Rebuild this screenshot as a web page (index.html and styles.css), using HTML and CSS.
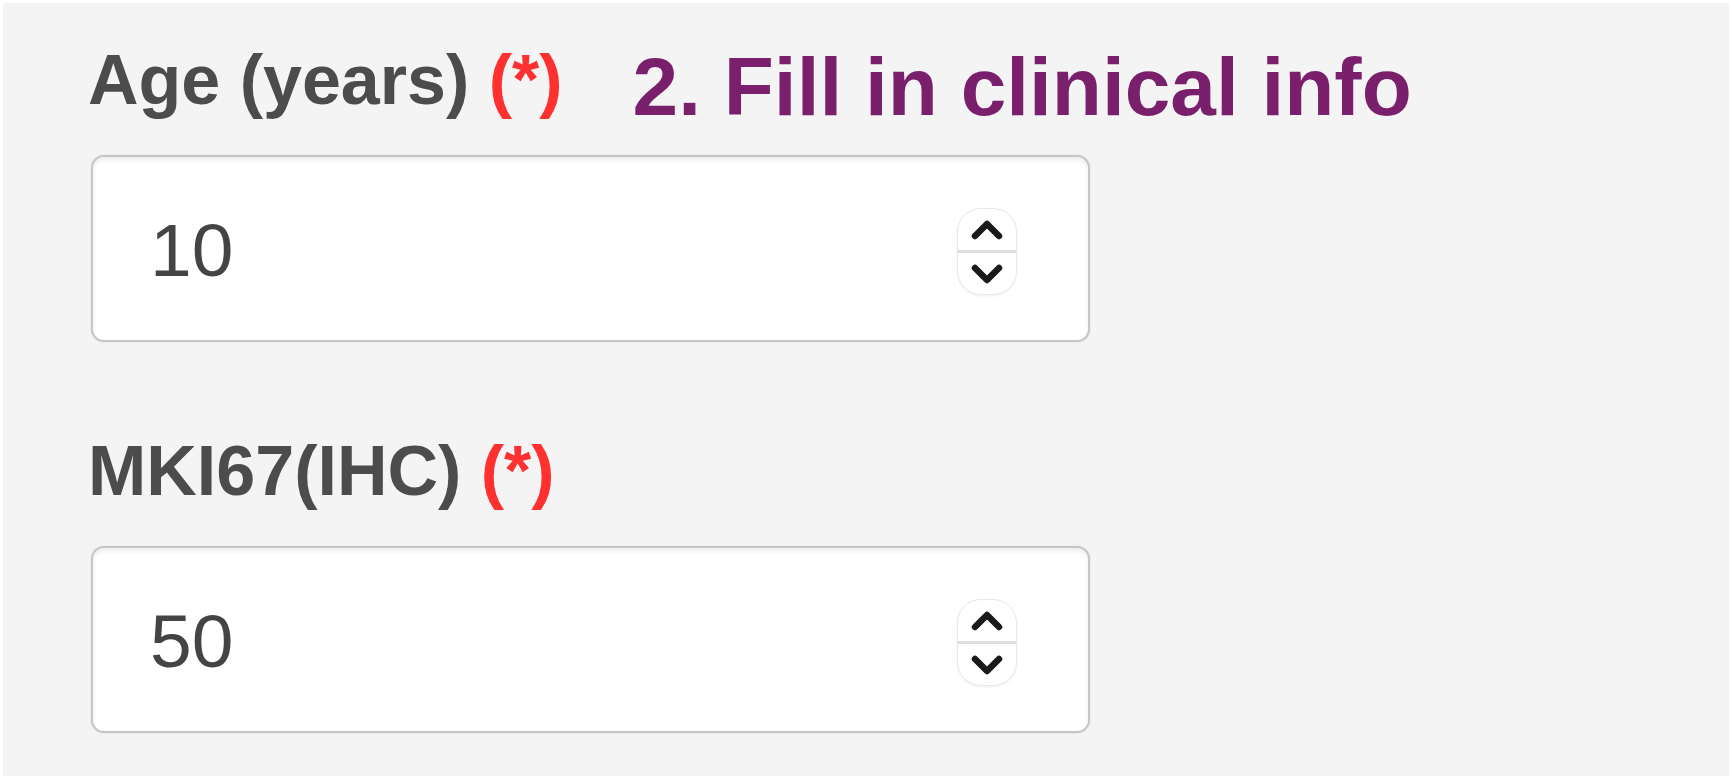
FILE: index.html
```html
<!DOCTYPE html>
<html lang="en">
<head>
<meta charset="utf-8">
<title>Clinical info</title>
<link rel="stylesheet" href="styles.css">
</head>
<body>
<div class="panel">
  <div class="field">
    <div class="field-head">
      <label class="label">Age (years) <span class="req">(*)</span></label>
      <h2 class="note">2. Fill in clinical info</h2>
    </div>
    <div class="input">
      <span class="value">10</span>
      <div class="spinner">
        <div class="spin-btn spin-up">
          <svg class="chev" width="34" height="22" viewBox="0 0 34 22"><path d="M5 17 L17 5 L29 17" fill="none" stroke="#1a1a1a" stroke-width="6.5" stroke-linecap="round" stroke-linejoin="round"/></svg>
        </div>
        <div class="spin-btn spin-down">
          <svg class="chev" width="34" height="22" viewBox="0 0 34 22"><path d="M5 5 L17 17 L29 5" fill="none" stroke="#1a1a1a" stroke-width="6.5" stroke-linecap="round" stroke-linejoin="round"/></svg>
        </div>
      </div>
    </div>
  </div>
  <div class="field field-second">
    <div class="field-head">
      <label class="label">MKI67(IHC) <span class="req">(*)</span></label>
    </div>
    <div class="input">
      <span class="value">50</span>
      <div class="spinner">
        <div class="spin-btn spin-up">
          <svg class="chev" width="34" height="22" viewBox="0 0 34 22"><path d="M5 17 L17 5 L29 17" fill="none" stroke="#1a1a1a" stroke-width="6.5" stroke-linecap="round" stroke-linejoin="round"/></svg>
        </div>
        <div class="spin-btn spin-down">
          <svg class="chev" width="34" height="22" viewBox="0 0 34 22"><path d="M5 5 L17 17 L29 5" fill="none" stroke="#1a1a1a" stroke-width="6.5" stroke-linecap="round" stroke-linejoin="round"/></svg>
        </div>
      </div>
    </div>
  </div>
</div>
</body>
</html>
```
FILE: styles.css
```css
html, body {
  margin: 0;
  padding: 0;
  background: #ffffff;
  font-family: "Liberation Sans", Arial, sans-serif;
}

.panel {
  margin: 3px;
  width: 1726px;
  height: 773px;
  box-sizing: border-box;
  background: #f4f4f4;
  padding: 41px 0 0 85px;
  overflow: hidden;
}

.field-head {
  display: flex;
  align-items: flex-start;
  height: 71px;
}

.label {
  margin-top: 1px;
  font-size: 70px;
  line-height: 70px;
  font-weight: bold;
  color: #4c4c4c;
  white-space: nowrap;
}

.req {
  color: #ff3030;
}

.note {
  margin: 2px 0 0 70px;
  font-size: 82px;
  line-height: 82px;
  font-weight: bold;
  color: #7a1f6b;
  white-space: nowrap;
}

.field-second {
  margin-top: 93px;
}

.input {
  margin: 40px 0 0 3px;
  width: 999px;
  height: 187px;
  box-sizing: border-box;
  border: 2px solid #c6c6c6;
  border-radius: 13px;
  background: #ffffff;
  box-shadow: inset 0 3px 4px rgba(0, 0, 0, 0.07), 0 0 2px rgba(0, 0, 0, 0.12);
  display: flex;
  align-items: center;
  padding: 0 71px 0 57px;
}

.value {
  margin-top: 3px;
  font-size: 75px;
  line-height: 75px;
  color: #444444;
}

.spinner {
  margin-left: auto;
  margin-top: 6px;
  flex: none;
  width: 60px;
  height: 87px;
  box-sizing: border-box;
  border: 1px solid #e8e8e8;
  border-radius: 24px;
  background: #ffffff;
  box-shadow: 0 1px 3px rgba(0, 0, 0, 0.06);
  display: flex;
  flex-direction: column;
  overflow: hidden;
}

.spin-btn {
  flex: 1;
  display: flex;
  align-items: center;
  justify-content: center;
}

.spin-up {
  border-bottom: 3px solid #dedede;
}

.chev {
  display: block;
  flex: none;
  width: 34px;
  height: 22px;
}
```
